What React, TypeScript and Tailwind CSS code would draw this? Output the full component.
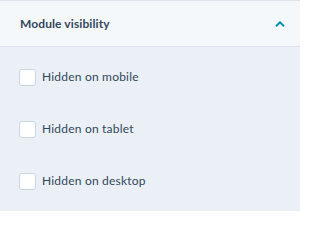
import { ChevronUp } from "lucide-react";

const options = ["Hidden on mobile", "Hidden on tablet", "Hidden on desktop"];

function Checkbox({ label }: { label: string }) {
  return (
    <label className="flex items-center h-4 gap-[6px] cursor-pointer">
      <span className="w-[17px] h-[17px] rounded-[3px] border border-[#cbd6e2] bg-white shrink-0" />
      <span className="text-[12px] text-[#33475b] leading-none tracking-[0.2px]">{label}</span>
    </label>
  );
}

export default function App() {
  return (
    <div
      className="w-[300px] h-[211px] bg-[#eaf0f6] overflow-hidden"
      style={{ fontFamily: "Lato, 'Noto Sans', sans-serif" }}
    >
      {/* Section header */}
      <div className="h-[47px] bg-[#f5f8fa] border-t border-b border-[#dfe3eb] flex items-center justify-between pl-5 pr-[13px]">
        <span className="text-[12px] font-bold text-[#33475b] tracking-[0.1px] pt-[1px]">Module visibility</span>
        <ChevronUp className="w-[14px] h-[14px] text-[#0091ae]" strokeWidth={3.2} />
      </div>

      {/* Options */}
      <div className="pt-[22px] pl-[19px] flex flex-col gap-9">
        {options.map((o) => (
          <Checkbox key={o} label={o} />
        ))}
      </div>
    </div>
  );
}
